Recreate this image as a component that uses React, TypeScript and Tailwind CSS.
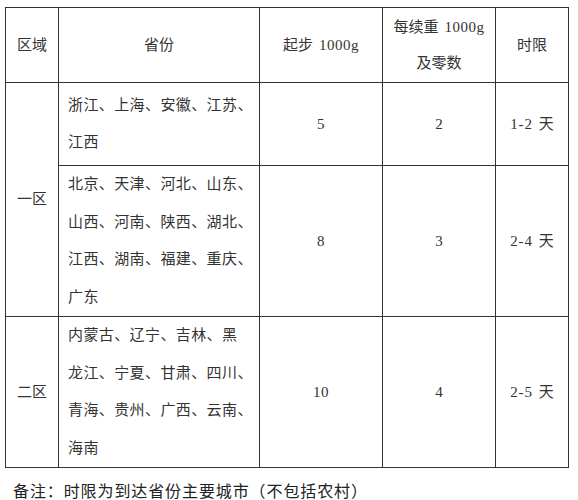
const font = { fontFamily: '"Liberation Serif", "Noto Sans CJK SC", serif' }

type Row = {
  zone?: string
  span?: number
  provinces: string[]
  first: string
  extra: string
  days: string
  h: string
}

const rows: Row[] = [
  { zone: "一区", span: 2, provinces: ["浙江、上海、安徽、江苏、", "江西"], first: "5", extra: "2", days: "1-2", h: "h-[83px]" },
  {
    provinces: ["北京、天津、河北、山东、", "山西、河南、陕西、湖北、", "江西、湖南、福建、重庆、", "广东"],
    first: "8",
    extra: "3",
    days: "2-4",
    h: "h-[151px]",
  },
  {
    zone: "二区",
    span: 1,
    provinces: ["内蒙古、辽宁、吉林、黑", "龙江、宁夏、甘肃、四川、", "青海、贵州、广西、云南、", "海南"],
    first: "10",
    extra: "4",
    days: "2-5",
    h: "h-[151px]",
  },
]

export default function App() {
  return (
    <div className="w-[578px] h-[500px] bg-white pt-[7px] pl-[5px] text-[#333] text-[15px]" style={font}>
      <table className="table-fixed border-collapse w-[563px]">
        <colgroup>
          <col className="w-[53px]" />
          <col className="w-[201px]" />
          <col className="w-[123px]" />
          <col className="w-[113px]" />
          <col className="w-[73px]" />
        </colgroup>
        <thead>
          <tr className="h-[75px]">
            <th className="border border-[#333] font-normal text-center">区域</th>
            <th className="border border-[#333] font-normal text-center">省份</th>
            <th className="border border-[#333] font-normal text-center">
              起步<span className="ml-[6px] tracking-[0.5px]">1000g</span>
            </th>
            <th className="border border-[#333] font-normal text-center leading-[36px]">
              每续重<span className="ml-[6px] tracking-[0.5px]">1000g</span>
              <br />
              及零数
            </th>
            <th className="border border-[#333] font-normal text-center">时限</th>
          </tr>
        </thead>
        <tbody>
          {rows.map((r, i) => (
            <tr key={i} className={r.h}>
              {r.zone && (
                <td rowSpan={r.span} className="border border-[#333] text-center align-middle">
                  {r.zone}
                </td>
              )}
              <td className="border border-[#333] pl-[9px] pr-1 align-middle leading-[37.5px] tracking-[0.4px]">
                {r.provinces.map((p) => (
                  <div key={p}>{p}</div>
                ))}
              </td>
              <td className="border border-[#333] text-center align-middle tracking-[0.5px]">{r.first}</td>
              <td className="border border-[#333] text-center align-middle">{r.extra}</td>
              <td className="border border-[#333] text-center align-middle">
                <span className="tracking-[0.8px]">{r.days}</span>
                <span className="ml-[6px]">天</span>
              </td>
            </tr>
          ))}
        </tbody>
      </table>
      <p className="mt-[12px] ml-[8px] text-[16px] text-[#222] tracking-[0.9px]">
        备注：时限为到达省份主要城市（不包括农村）
      </p>
    </div>
  )
}
